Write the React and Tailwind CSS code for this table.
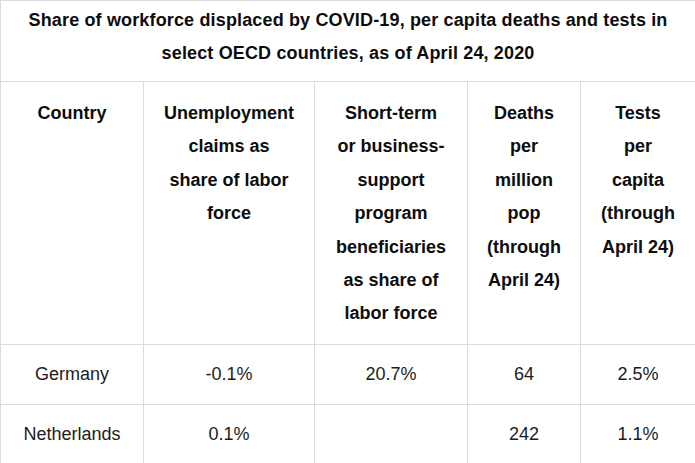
import React from "react";

const headers = [
  ["Country"],
  ["Unemployment", "claims as", "share of labor", "force"],
  ["Short-term", "or business-", "support", "program", "beneficiaries", "as share of", "labor force"],
  ["Deaths", "per", "million", "pop", "(through", "April 24)"],
  ["Tests", "per", "capita", "(through", "April 24)"],
];

const rows = [
  ["Germany", "-0.1%", "20.7%", "64", "2.5%"],
  ["Netherlands", "0.1%", "", "242", "1.1%"],
];

const App = () => {
  return (
    <div className="w-[695px] h-[463px] overflow-hidden bg-white font-['Liberation_Sans',Arial,sans-serif]">
      <table className="w-[695px] table-fixed border-collapse">
        <colgroup>
          <col className="w-[143px]" />
          <col className="w-[171px]" />
          <col className="w-[153px]" />
          <col className="w-[113px]" />
          <col className="w-[115px]" />
        </colgroup>
        <tbody>
          <tr>
            <td
              colSpan={5}
              className="border border-[#dcdcdc] pt-[3px] pb-[11px] text-center text-[18px] leading-[33px] font-bold text-[#0d0d0d] tracking-[0.15px]"
            >
              Share of workforce displaced by COVID-19, per capita deaths and tests in
              <br />
              select OECD countries, as of April 24, 2020
            </td>
          </tr>
          <tr>
            {headers.map((lines, i) => (
              <th
                key={i}
                className="border border-[#dcdcdc] align-top pt-[15px] pb-[13px] px-0 text-center text-[18px] leading-[33.4px] font-bold text-[#0d0d0d] whitespace-nowrap"
              >
                {lines.map((line, j) => (
                  <div key={j}>{line}</div>
                ))}
              </th>
            ))}
          </tr>
          {rows.map((row, i) => (
            <tr key={i}>
              {row.map((cell, j) => (
                <td
                  key={j}
                  className="border border-[#dcdcdc] py-[18px] text-center text-[18px] leading-[23px] text-[#1c1c1c]"
                >
                  {cell}
                </td>
              ))}
            </tr>
          ))}
        </tbody>
      </table>
    </div>
  );
};

export default App;
